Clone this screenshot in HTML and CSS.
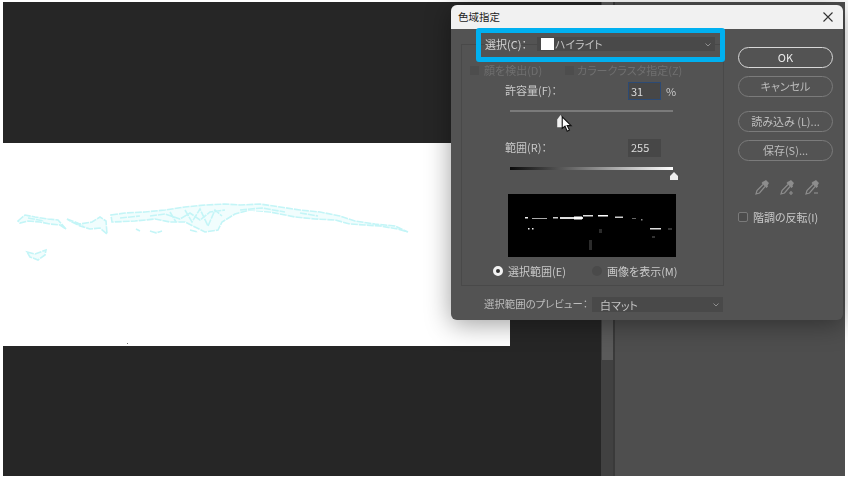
FILE: index.html
```html
<!DOCTYPE html>
<html lang="ja">
<head>
    <meta charset="utf-8">
    <title>色域指定</title>
    <link rel="stylesheet" href="styles.css">
</head>
<body>
<div class="frame">
    <div class="canvas">
        <div class="photo">
            <svg class="ants" viewBox="0 0 507 203" width="507" height="203">
                <g transform="translate(-3 -143)">
                    <path d="M18 221 L25 215 L35 217 L48 219 L58 220 L66 229 L60 225 L50 224 L40 222 L28 221 L20 223 Z"/>
                    <path d="M67 219 L80 224 L92 222 L100 217 L106 221 L107 234 L100 228 L90 229 L80 226 L72 222 Z"/>
                    <path d="M111 215 L125 213 L145 212 L165 210 L185 207 L205 205 L225 204 L240 205 L260 204 L280 207 L300 210 L320 212 L340 216 L355 221 L375 224 L395 226 L408 232 L398 229 L380 226 L365 225 L350 224 L335 220 L315 219 L295 217 L270 212 L250 210 L235 214 L222 222 L218 230 L205 232 L195 227 L185 222 L170 222 L155 219 L135 221 L112 222 Z"/>
                    <path d="M27 252 L35 254 L46 250 L45 255 L38 260 L30 257 Z"/>
                    <path d="M150 216 L165 214 L180 219 L190 213 L200 220 L210 212 L225 210 M185 210 L192 222 L200 209 L208 226 L215 210 L222 216 M170 212 L176 222 M240 210 L262 208 L285 212 M300 213 L318 216 M120 218 L140 216 M75 222 L84 227 M28 218 L44 221"/>
                    <path d="M150 231 L156 233 L162 231 M136 229 L140 231 M190 230 L198 232"/>
                </g>
                <rect x="124" y="200" width="1" height="1" class="speck"/>
            </svg>
        </div>
    </div>
    <div class="scrollbar"><div class="scroll-thumb"></div></div>
    <div class="panel"></div>

    <div class="dialog">
        <div class="titlebar">
            <span class="title">色域指定</span>
            <svg class="close" viewBox="0 0 10 10" width="10" height="10"><path d="M0.5 0.5 L9.5 9.5 M9.5 0.5 L0.5 9.5"/></svg>
        </div>
        <div class="body">
            <div class="left">
                <div class="group">
                    <div class="select-row">
                        <span class="select-label">選択(C)：</span>
                        <div class="select">
                            <span class="swatch"></span>
                            <span>ハイライト</span>
                            <svg class="chev" viewBox="0 0 6 4" width="6" height="4"><path d="M0.5 0.5 L3 3 L5.5 0.5"/></svg>
                        </div>
                    </div>
                    <div class="check-row">
                        <span class="check-dim"></span><span class="dim-label first">顔を検出(D)</span>
                        <span class="check-dim"></span><span class="dim-label">カラークラスタ指定(Z)</span>
                    </div>
                    <div class="field field-fuzz">
                        <span class="field-label">許容量(F)：</span>
                        <span class="input focus">31</span>
                        <span class="unit">%</span>
                    </div>
                    <div class="track"></div>
                    <div class="field field-range">
                        <span class="field-label">範囲(R)：</span>
                        <span class="input">255</span>
                    </div>
                    <div class="track gradient"></div>
                    <div class="thumb-row"><span class="thumb"></span></div>
                    <svg class="preview" viewBox="0 0 168 63" width="168" height="63">
                        <rect x="17" y="23" width="3" height="1.5" fill="#eee"/>
                        <rect x="24" y="24" width="15" height="1" fill="#aaa"/>
                        <rect x="45" y="23" width="5" height="1.5" fill="#ccc"/>
                        <rect x="52" y="23" width="23" height="2" fill="#ddd"/>
                        <rect x="66" y="22.5" width="8" height="3" fill="#fff"/>
                        <rect x="75" y="21" width="10" height="1.5" fill="#ddd"/>
                        <rect x="90" y="21" width="10" height="1.5" fill="#fff"/>
                        <rect x="107" y="22.5" width="8" height="1.5" fill="#ccc"/>
                        <rect x="124" y="24" width="4" height="1" fill="#666"/>
                        <rect x="133" y="25" width="1.5" height="1.5" fill="#888"/>
                        <rect x="20" y="34" width="1.5" height="1.5" fill="#eee"/>
                        <rect x="24" y="34" width="1.5" height="1.5" fill="#eee"/>
                        <rect x="142" y="34" width="11" height="1.5" fill="#ddd"/>
                        <rect x="160" y="34" width="4" height="2" fill="#333"/>
                        <rect x="81" y="46" width="3" height="10" fill="#2b2b2b"/>
                        <rect x="91" y="35" width="3" height="4" fill="#2b2b2b"/>
                        <rect x="144" y="42" width="3" height="2" fill="#333"/>
                    </svg>
                    <div class="radio-row">
                        <span class="radio on"></span><span class="radio-label first">選択範囲(E)</span>
                        <span class="radio"></span><span class="radio-label">画像を表示(M)</span>
                    </div>
                </div>
                <div class="matte-row">
                    <span class="matte-label">選択範囲のプレビュー：</span>
                    <div class="select matte">
                        <span>白マット</span>
                        <svg class="chev" viewBox="0 0 6 4" width="6" height="4"><path d="M0.5 0.5 L3 3 L5.5 0.5"/></svg>
                    </div>
                </div>
            </div>
            <div class="right">
                <div class="btn primary">OK</div>
                <div class="btn">キャンセル</div>
                <div class="btn wide-gap">読み込み (L)...</div>
                <div class="btn">保存(S)...</div>
                <div class="droppers">
                    <svg viewBox="0 0 14 15" width="14" height="15"><path class="head" d="M8.5 1.5 L11 0 L14 3 L12.5 5.5 L13 6.5 L11.5 8 L6.5 3 L8 1.5 Z"/><path class="stem" d="M8 4.5 L2 10.5 L1 14 L4.5 13 L10 6.5"/></svg>
                    <svg viewBox="0 0 14 15" width="14" height="15"><path class="head" d="M8.5 1.5 L11 0 L14 3 L12.5 5.5 L13 6.5 L11.5 8 L6.5 3 L8 1.5 Z"/><path class="stem" d="M8 4.5 L2 10.5 L1 14 L4.5 13 L10 6.5"/><path class="stem" d="M9 13 H13 M11 11 V15"/></svg>
                    <svg viewBox="0 0 14 15" width="14" height="15"><path class="head" d="M8.5 1.5 L11 0 L14 3 L12.5 5.5 L13 6.5 L11.5 8 L6.5 3 L8 1.5 Z"/><path class="stem" d="M8 4.5 L2 10.5 L1 14 L4.5 13 L10 6.5"/><path class="stem" d="M9 13 H13"/></svg>
                </div>
                <div class="invert">
                    <span class="check"></span><span>階調の反転(I)</span>
                </div>
            </div>
        </div>

        <!-- things on top of the dialog -->
        <div class="highlight"></div>
        <svg class="pointer" viewBox="0 0 16 18" width="18" height="20">
            <path class="slider-thumb" d="M1 5 L4 1 L7 5 L7 12 L1 12 Z"/>
            <path class="arrow" d="M5.5 2.5 L5.5 13 L8 11 L10 15.5 L12 14.5 L10 10.5 L13.5 10.5 Z"/>
        </svg>
    </div>
</div>
</body>
</html>
```

FILE: styles.css
```css
html, body {
    margin: 0;
    padding: 0;
    background-color: #ffffff;
}

body {
    width: 848px;
    height: 480px;
    overflow: hidden;
    font-family: "Noto Sans CJK JP", "Noto Sans", sans-serif;
    font-size: 11px;
    font-feature-settings: "palt";
    color: #c9c9c9;
}

.frame {
    position: relative;
    display: flex;
    width: 842px;
    height: 474px;
    margin: 2px 0 0 3px;
    background-color: #262626;
}

.canvas {
    width: 598px;
    padding-top: 141px;
    box-sizing: border-box;
}

.photo {
    width: 507px;
    height: 203px;
    background-color: #ffffff;
}

.ants {
    display: block;
    filter: blur(0.5px);
}

.ants path {
    fill: #f1fdfd;
    stroke: #c4f5f7;
    stroke-width: 1.6;
    stroke-dasharray: 7 1;
}

.ants .speck {
    fill: #777777;
}

.scrollbar {
    width: 14px;
    background-color: #414141;
    border-right: 2px solid #3a3a3a;
    box-sizing: border-box;
}

.scroll-thumb {
    width: 11px;
    height: 358px;
    margin-left: 1px;
    background-color: #5a5a5a;
}

.panel {
    flex: 1;
    background-color: #4e4e4e;
}

.dialog {
    position: absolute;
    left: 448px;
    top: 3px;
    width: 392px;
    height: 315px;
    border-radius: 6px;
    background-color: #535353;
    box-shadow: 0 4px 26px rgba(0, 0, 0, 0.38);
    filter: blur(0.35px);
}

.titlebar {
    display: flex;
    align-items: center;
    justify-content: space-between;
    height: 24px;
    padding: 0 10px 0 7px;
    border-radius: 6px 6px 0 0;
    background-color: #f1f1f1;
    color: #222222;
    font-size: 10.5px;
}

.title {
    padding-bottom: 2px;
}

.close path {
    fill: none;
    stroke: #333333;
    stroke-width: 1.1;
}

.body {
    display: flex;
}

.left {
    width: 273px;
    padding-left: 10px;
    box-sizing: border-box;
}

.group {
    width: 263px;
    height: 242px;
    margin-top: 15px;
    border: 1px solid #494949;
    box-sizing: border-box;
}

.select-row {
    display: flex;
    align-items: center;
    height: 14px;
    margin: -8px 0 0 23px;
}

.select-label {
    width: 52px;
    color: #d4d4d4;
}

.select {
    display: flex;
    align-items: center;
    position: relative;
    width: 178px;
    height: 14px;
    box-sizing: border-box;
    background-color: #494949;
    color: #c4c4c4;
    line-height: 14px;
}

.swatch {
    width: 13px;
    height: 12px;
    margin: 0 1px 0 4px;
    background-color: #ffffff;
}

.chev {
    position: absolute;
    right: 4px;
    top: 6px;
}

.chev path {
    fill: none;
    stroke: #8f8f8f;
    stroke-width: 1;
}

.check-row {
    display: flex;
    align-items: center;
    height: 14px;
    margin: 12px 0 0 8px;
}

.check-dim {
    width: 9px;
    height: 9px;
    background-color: #4d4d4d;
}

.dim-label {
    margin-left: 3px;
    color: #6f6f6f;
}

.dim-label.first {
    width: 81px;
    margin-left: 5px;
}

.field {
    display: flex;
    align-items: center;
    height: 18px;
    padding-left: 43px;
}

.field-fuzz {
    margin-top: 5px;
}

.field-range {
    margin-top: 27px;
}

.field-label {
    width: 123px;
    padding-bottom: 2px;
}

.input {
    width: 33px;
    height: 18px;
    padding-left: 3px;
    box-sizing: border-box;
    background-color: #474747;
    color: #dcdcdc;
    line-height: 16px;
}

.input.focus {
    border: 1px solid #2c4a74;
    padding-left: 2px;
}

.unit {
    margin-left: 5px;
}

.track {
    width: 163px;
    height: 2px;
    margin: 10px 0 0 48px;
    background-color: #7a7a7a;
}

.track.gradient {
    height: 3px;
    background: linear-gradient(to right, #0a0a0a, #ffffff);
}

.thumb-row {
    height: 22px;
    margin-left: 208px;
}

.thumb {
    display: block;
    width: 8px;
    height: 8px;
    margin-top: 2px;
    background-color: #f0f0f0;
    clip-path: polygon(50% 0, 100% 50%, 100% 100%, 0 100%, 0 50%);
}

.preview {
    display: block;
    margin-left: 46px;
    background-color: #000000;
}

.preview rect {
    filter: blur(0.5px);
}

.radio-row {
    display: flex;
    align-items: center;
    height: 14px;
    margin: 7px 0 0 31px;
}

.radio {
    width: 10px;
    height: 10px;
    border-radius: 50%;
    background-color: #4a4a4a;
    box-sizing: border-box;
}

.radio.on {
    border: 3px solid #f2f2f2;
    background-color: #333333;
}

.radio-label {
    margin-left: 5px;
}

.radio-label.first {
    width: 84px;
}

.matte-row {
    display: flex;
    align-items: center;
    height: 15px;
    margin: 11px 0 0 23px;
}

.matte-label {
    width: 108px;
    padding-bottom: 2px;
    white-space: nowrap;
    font-size: 10.4px;
    color: #bdbdbd;
}

.select.matte {
    width: 131px;
    height: 15px;
    padding-left: 8px;
}

.right {
    flex: 1;
    padding: 18px 0 0 14px;
}

.btn {
    width: 95px;
    height: 21px;
    margin-bottom: 8px;
    border: 1px solid #7b7b7b;
    border-radius: 11px;
    box-sizing: border-box;
    text-align: center;
    line-height: 18px;
    color: #bcbcbc;
}

.btn.primary {
    border-color: #d8d8d8;
    color: #ececec;
}

.btn.wide-gap {
    margin-top: 14px;
}

.droppers {
    display: flex;
    gap: 11px;
    margin: 19px 0 0 17px;
}

.droppers .head {
    fill: #8d8d8d;
}

.droppers .stem {
    fill: none;
    stroke: #8d8d8d;
    stroke-width: 1.2;
}

.invert {
    display: flex;
    align-items: center;
    height: 14px;
    margin-top: 15px;
}

.check {
    width: 10px;
    height: 10px;
    margin-right: 5px;
    border: 1px solid #7a7a7a;
    border-radius: 2px;
    box-sizing: border-box;
    background-color: #4c4c4c;
}

.highlight {
    position: absolute;
    left: 25px;
    top: 23px;
    width: 249px;
    height: 34px;
    border: 5px solid #00b0f0;
    border-radius: 3px;
    box-sizing: border-box;
}

.pointer {
    position: absolute;
    left: 105px;
    top: 109px;
}

.slider-thumb {
    fill: #f2f2f2;
}

.arrow {
    fill: #ffffff;
    stroke: #111111;
    stroke-width: 1;
}
```
